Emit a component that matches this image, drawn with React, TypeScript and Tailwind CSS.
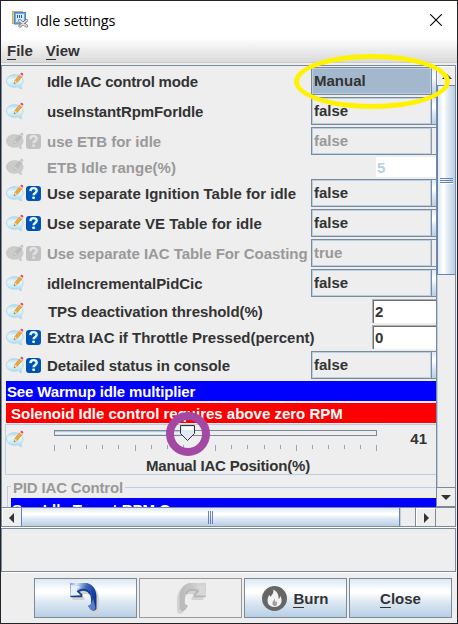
import React from "react";

const FONT = "font-['Liberation_Sans',Arial,sans-serif]";
const METAL = "bg-[linear-gradient(180deg,#dde8f3_0%,#ffffff_30%,#ffffff_36%,#dde8f3_60%,#b8cfe5_100%)]";

type Row = {
  label: string;
  value: string;
  kind: "combo" | "text";
  help?: boolean;
  disabled?: boolean;
  selected?: boolean;
  indent?: boolean;
  spacing?: string;
};

const rows: Row[] = [
  { label: "Idle IAC control mode", value: "Manual", kind: "combo", selected: true, spacing: "tracking-[-0.2px]" },
  { label: "useInstantRpmForIdle", value: "false", kind: "combo", spacing: "tracking-[-0.1px]" },
  { label: "use ETB for idle", value: "false", kind: "combo", help: true, disabled: true },
  { label: "ETB Idle range(%)", value: "5", kind: "text", disabled: true, spacing: "tracking-[0.04px]" },
  { label: "Use separate Ignition Table for idle", value: "false", kind: "combo", help: true, spacing: "tracking-[0.03px]" },
  { label: "Use separate VE Table for idle", value: "false", kind: "combo", help: true, spacing: "tracking-[0.03px]" },
  { label: "Use separate IAC Table For Coasting", value: "true", kind: "combo", help: true, disabled: true, spacing: "tracking-[-0.05px]" },
  { label: "idleIncrementalPidCic", value: "false", kind: "combo", spacing: "tracking-[-0.06px]" },
  { label: "TPS deactivation threshold(%)", value: "2", kind: "text", indent: true, spacing: "tracking-[-0.07px]" },
  { label: "Extra IAC if Throttle Pressed(percent)", value: "0", kind: "text", help: true },
  { label: "Detailed status in console", value: "false", kind: "combo", help: true, spacing: "tracking-[-0.08px]" },
];

function NoteIcon({ disabled }: { disabled?: boolean }) {
  return (
    <svg width="18" height="18" viewBox="0 0 18 18" className="shrink-0">
      <defs>
        <linearGradient id="bubble" x1="0" y1="0" x2="0" y2="1">
          <stop offset="0" stopColor="#b4d8e8" />
          <stop offset=".35" stopColor="#e6f5fa" />
          <stop offset=".6" stopColor="#d3eff8" />
          <stop offset="1" stopColor="#a0d9ec" />
        </linearGradient>
      </defs>
      <path
        d="M8.500 2.700C3.700 2.700.5 5.300.5 9s3.200 6.200 8 6.200c1.300 0 2.500-.2 3.500-.6 1 1.300 2.600 2 3.600 2.100-.6-1-.8-2-.6-3.300 1.300-1.200 2-2.700 2-4.400 0-3.700-3.700-6.300-8.500-6.300Z"
        fill={disabled ? "#cbcbcb" : "url(#bubble)"}
        stroke={disabled ? "#c5c5c5" : "#a9d3e3"}
        strokeWidth=".8"
      />
      <path d="m8 11.900 1-3.600 5-5.900 2.400 2-5.200 6Z" fill={disabled ? "#bcbcbc" : "#f3a638"} stroke={disabled ? "#b4b4b4" : "#ce8332"} strokeWidth=".5" />
      <path d="m8 11.900 1-3.400 2.100 1.800Z" fill={disabled ? "#d7d7d7" : "#f7d9a6"} />
      <path d="m8 11.900.4-1.500.9.800Z" fill={disabled ? "#aaa" : "#555"} />
      <path d="m13.500 2.800.8-.8 2.200 1.800-.7.900Z" fill={disabled ? "#d7d7d7" : "#e6e6ed"} />
      <path d="m14.300 1.900.9-1.100c.6-.6 2.600.8 2.100 1.700l-.9 1.200Z" fill={disabled ? "#c2c2c2" : "#db4866"} />
    </svg>
  );
}

function HelpIcon({ disabled }: { disabled?: boolean }) {
  return (
    <svg width="15" height="15" viewBox="0 0 15 15" className="ml-[2px] shrink-0">
      <rect width="15" height="15" rx="3" fill={disabled ? "#c1c1c1" : "#0053b3"} />
      <path
        d="M4.400 5.100C4.500 1.200 10.800 1.300 10.700 4.800c0 2.100-3.100 2.200-3.100 4.500"
        fill="none"
        stroke={disabled ? "#e3e3e3" : "#e4ffff"}
        strokeWidth="2.400"
      />
      <rect x="6.300" y="10.500" width="2.700" height="2.500" rx=".8" fill={disabled ? "#e3e3e3" : "#e4ffff"} />
    </svg>
  );
}

function Field({ row }: { row: Row }) {
  if (row.kind === "text") {
    return row.disabled ? (
      <div className="ml-auto flex h-5 w-[60px] shrink-0 items-center bg-white pl-px text-[#b8cfe5]">{row.value}</div>
    ) : (
      <div className="ml-auto flex h-6 w-16 shrink-0 items-center border-t border-l border-[#b0b0b0]">
        <div className="flex h-full w-full items-center border-t border-l border-[#707070] bg-white pb-px pl-px">{row.value}</div>
      </div>
    );
  }
  return (
    <div className="ml-auto flex h-7 w-[125px] shrink-0 border-y border-l border-[#7a8a99]">
      <div
        className={`flex h-full w-[119px] items-center border border-[#b8cfe5] pb-px pl-px ${row.selected ? "bg-[#a3b8cc]" : ""}`}
      >
        {row.value}
      </div>
      <div className={`h-full flex-1 border-l ${row.disabled ? "border-[#999]" : "border-[#7a8a99] " + METAL}`} />
    </div>
  );
}

function SettingRow({ row }: { row: Row }) {
  const height = row.kind === "combo" ? "h-7" : row.disabled ? "h-5" : "h-6";
  return (
    <div className={`flex items-center pl-1 ${height} ${row.disabled ? "text-[#999]" : ""}`}>
      <div className="flex w-[41px] shrink-0 items-center">
        <NoteIcon disabled={row.disabled} />
        {row.help && <HelpIcon disabled={row.disabled} />}
      </div>
      <span className={`whitespace-nowrap pt-px ${row.indent ? "pl-px" : ""} ${row.spacing ?? ""}`}>{row.label}</span>
      <Field row={row} />
    </div>
  );
}

function PositionSlider() {
  return (
    <div className="-mt-px ml-[3px] h-[51px] border-y border-l border-[#b8cfe5]">
      <div className="flex h-[29px]">
        <div className="pt-[5px]"><NoteIcon /></div>
        <div className="relative ml-[30px] w-[323px]">
          <div className="mt-[5px] h-[6px] border border-[#7a8a99]">
            <div className="h-full w-[132px] bg-[linear-gradient(180deg,#a3b8cc,#ffffff_55%,#b8cfe5)]" />
          </div>
          <svg className="absolute top-0 left-0" width="324" height="29">
            {Array.from({ length: 21 }, (_, i) => (
              <rect key={i} x={Math.round(i * 16.12)} y="20" width="1" height={i % 5 === 0 ? 6 : 4} fill="#8ea7c3" />
            ))}
            <path d="M126.500.5h14v8l-7 7-7-7Z" fill="#dfeaf4" stroke="#333" />
            <path d="M128 2h11v3h-11Z" fill="#fff" />
          </svg>
          <div className="absolute -top-[13px] left-[112px] size-11 rounded-full border-[8px] border-[#a349a4]" />
        </div>
        <span className="ml-auto pt-[5px] pr-[9px]">41</span>
      </div>
      <div className="pl-[140px] leading-[23px] tracking-[-0.2px] whitespace-nowrap">Manual IAC Position(%)</div>
    </div>
  );
}

function AppIcon() {
  return (
    <svg width="17" height="17" viewBox="0 0 17 17">
      <rect x=".5" y=".5" width="10" height="12" fill="#e8c783" stroke="#c9ae75" />
      <rect x="2.500" y="1.500" width="11" height="11.500" fill="#75a9d8" stroke="#4a86c6" />
      <path d="M4 3h8v8H4Z" fill="#d7ecff" />
      <path d="M5.500 4v3m2-3v3m2-3v3" stroke="#275a98" />
      <path d="m7.500 9.500 7 5.500M8 15l6.500-5.500" stroke="#777" strokeWidth="3" strokeLinecap="round" />
      <path d="m7.500 9.500 7 5.500M8 15l6.500-5.500" stroke="#e3e3e3" strokeWidth="1.600" strokeLinecap="round" />
    </svg>
  );
}

function ArrowIcon({ redo }: { redo?: boolean }) {
  const body = "M0 0h17c6 1.500 9 6 9.500 13v13l-2.500 2-3-1-3-4 3-2c.5-6-.5-11-4-12.500C14 7.500 11 8 9.500 9l2.500 3v2H0Z";
  return (
    <svg width="31" height="31" viewBox="0 0 31 31" className={redo ? "-scale-x-100" : ""}>
      <defs>
        <linearGradient id={redo ? "redo" : "undo"} x1="0" y1="0" x2="1" y2=".35">
          <stop offset="0" stopColor={redo ? "#cfcfcf" : "#7896cf"} />
          <stop offset=".22" stopColor={redo ? "#d3d3d3" : "#dfe8f6"} />
          <stop offset=".6" stopColor={redo ? "#c4c4c4" : "#3d67b4"} />
          <stop offset="1" stopColor={redo ? "#bbbbbb" : "#0a369a"} />
        </linearGradient>
      </defs>
      <path d={body} transform="translate(2.500 3)" fill={redo ? "#d3d3d3" : "#d6d2ca"} />
      <path d={body} fill={redo ? "url(#redo)" : "url(#undo)"} />
      <path d="M1 4v8h9L7 8.500C6 6 8 5 11 4L1 2Z" fill={redo ? "#d8d8d8" : "#eaf0fa"} />
      <path
        d="M.5 13.500h11v-2L8 8.500C12 5.500 18 6 20 11"
        fill="none"
        stroke={redo ? "#b5b5b5" : "#153d98"}
        strokeWidth="1.600"
      />
      <path d="m18 23 3-2c1-2 2-4 2-6l2.500 10-1.500 3-3-1Z" fill={redo ? "#bcbcbc" : "#87a5d4"} opacity=".65" />
    </svg>
  );
}

function BurnIcon() {
  return (
    <svg width="25" height="25" viewBox="0 0 25 25">
      <circle cx="12.500" cy="12.500" r="12.500" fill="#666" />
      <path
        d="M11.200 3.500c.8 3.500-1.100 5.200-2.800 7.200-.7-.5-1-1.200-1.200-2C3.500 15.500 6.200 21 12.500 21s9-5.500 5.700-11.200c0 1.600-.6 2.700-1.600 3.200.4-4.200-1.700-7.900-5.400-9.500Z"
        fill="#f2f2f2"
      />
      <path d="M12.200 12.500c.4 2-1.800 2.600-1.800 5 0 1.500 1 2.500 2.300 2.500 2.800 0 3-3.500 1.500-5.100-.3.800-.6 1-1 1.100.1-1.400-.2-2.700-1-3.500Z" fill="#a0a0a0" />
    </svg>
  );
}

function Caret({ dir }: { dir: "up" | "down" | "left" | "right" }) {
  const paths = { up: "M0 8h10L5 3Z", down: "M0 3h10L5 8Z", left: "M8 0v10L3 5Z", right: "M3 0v10l5-5Z" };
  return (
    <svg width="10" height="10" viewBox="0 0 10 10">
      <path d={paths[dir]} fill="#333" />
    </svg>
  );
}

const buttonBase = "flex h-10 w-[103px] items-center justify-center border";

export default function App() {
  return (
    <div
      className={`relative flex h-[624px] w-[458px] flex-col overflow-hidden border border-[#24222a] bg-[#eee] text-[15px] leading-[17px] font-bold text-[#333] ${FONT}`}
    >
      <div className="flex h-[37px] shrink-0 items-center bg-white pr-[15px] pl-[11px]">
        <AppIcon />
        <span className="ml-[7px] pt-px font-['Open_Sans','Noto_Sans',sans-serif] text-[14.500px] font-normal tracking-[-0.15px] text-black">Idle settings</span>
        <svg className="ml-auto" width="12" height="12" viewBox="0 0 12 12">
          <path d="m.3.3 11.400 11.400M11.700.3.300 11.700" stroke="#000" strokeWidth="1.100" />
        </svg>
      </div>
      <div className="flex h-[25px] shrink-0 items-center gap-[13px] border-b border-[#ccc] bg-[linear-gradient(180deg,#fff,#dadada)] pl-[6px]">
        <span><span className="border-b border-[#333]">F</span>ile</span>
        <span><span className="border-b border-[#333]">V</span>iew</span>
      </div>
      <div className="h-[2px] shrink-0 bg-[#eee]" />
      <div className="mr-px flex h-[462px] shrink-0 flex-col border border-r border-[#7a8a99]">
        <div className="flex h-[441px] shrink-0">
          <div className="flex w-[434px] shrink-0 flex-col gap-[2px] overflow-hidden pt-px">
            {rows.map((row) => (
              <SettingRow key={row.label} row={row} />
            ))}
            <div className="ml-1 h-5 shrink-0 bg-[#0000ff] pt-[2px] pl-px tracking-[-0.15px] whitespace-nowrap text-white">See Warmup idle multiplier</div>
            <div className="ml-1 h-5 shrink-0 bg-[#ff0000] pt-[2px] pl-[5px] whitespace-nowrap text-white">Solenoid Idle control requires above zero RPM</div>
            <PositionSlider />
            <div className="-mt-px ml-[5px] h-10 shrink-0">
              <div className="flex h-[22px] items-center text-[#999]">
                <div className="mt-[10px] h-3 w-1 border-t border-l border-[#b8cfe5]" />
                <span className="px-[2px] tracking-[-0.17px] whitespace-nowrap">PID IAC Control</span>
                <div className="h-px flex-1 bg-[#b8cfe5]" />
              </div>
              <div className="border-l border-[#b8cfe5] pl-[3px]">
                <div className="h-5 bg-[#0000ff] pt-[3px] pl-px whitespace-nowrap text-white">See Idle Target RPM Curve</div>
              </div>
            </div>
          </div>
          <div className="flex flex-1 flex-col border-l border-[#7a8a99]">
            <div className="flex h-[19px] items-center justify-center border-t border-l border-white"><Caret dir="up" /></div>
            <div className="flex h-[190px] items-center justify-center border-y border-l border-[#6382bf] bg-[linear-gradient(90deg,#dde8f3_0%,#ffffff_32%,#dde8f3_60%,#b8cfe5_100%)] pt-[1px]">
              <div className="flex flex-col gap-px border-b border-white">
                <div className="h-px w-[13px] bg-[#6382bf]" />
                <div className="h-px w-[13px] bg-[#6382bf]" />
                <div className="h-px w-[13px] bg-[#6382bf]" />
              </div>
            </div>
            <div className="flex-1 border-l border-[#b8cfe5]" />
            <div className="flex h-5 items-center justify-center border-y border-[#7a8a99]"><Caret dir="down" /></div>
          </div>
        </div>
        <div className="flex flex-1 border-t border-[#7a8a99]">
          <div className="flex w-[19px] items-center justify-center border-t border-l border-white pr-[2px]"><Caret dir="left" /></div>
          <div className={`flex w-[379px] items-center justify-center gap-px border-x border-[#6382bf] pr-px ${METAL}`}>
            <div className="h-[13px] w-px bg-[#6382bf]" />
            <div className="h-[13px] w-px bg-[#6382bf]" />
            <div className="h-[13px] w-px bg-[#6382bf]" />
          </div>
          <div className="w-4 border-r border-l border-r-[#7a8a99] border-l-[#b8cfe5]" />
          <div className="flex w-5 items-center justify-center border-t border-r border-l border-t-white border-r-[#7a8a99] border-l-white"><Caret dir="right" /></div>
        </div>
      </div>
      <div className="h-px shrink-0 bg-white" />
      <div className="mr-px h-11 shrink-0 border border-[#7a8a99]" />
      <div className="h-px shrink-0 bg-white" />
      <div className="flex gap-[2px] pt-[5px] pl-[33px]">
        <div className={`${buttonBase} border-[#7a8a99] ${METAL}`}><ArrowIcon /></div>
        <div className={`${buttonBase} border-[#999]`}><ArrowIcon redo /></div>
        <div className={`${buttonBase} gap-[6px] border-[#7a8a99] ${METAL}`}>
          <BurnIcon />
          <span><span className="border-b border-[#333]">B</span>urn</span>
        </div>
        <div className={`${buttonBase} border-[#7a8a99] ${METAL}`}>
          <span><span className="border-b border-[#333]">C</span>lose</span>
        </div>
      </div>
      <div className="absolute top-[53px] left-[293px] h-[55px] w-[156px] rounded-[50%] border-[5px] border-[#fff200]" />
    </div>
  );
}
